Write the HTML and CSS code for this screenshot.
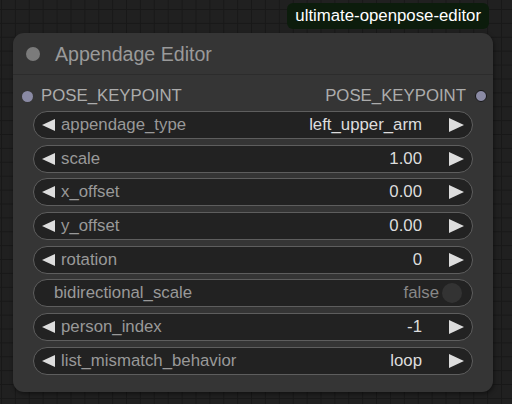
FILE: index.html
```html
<!DOCTYPE html>
<html>
<head>
<meta charset="utf-8">
<link rel="stylesheet" href="styles.css">
</head>
<body>
<div class="canvas">
  <div class="badge-row"><span class="badge">ultimate-openpose-editor</span></div>
  <div class="node">
    <div class="title">
      <span class="title-dot"></span>
      <span class="title-text">Appendage Editor</span>
    </div>
    <div class="body">
      <div class="slots">
        <div class="slot in"><span class="sdot"></span><span>POSE_KEYPOINT</span></div>
        <div class="slot out"><span>POSE_KEYPOINT</span><span class="sdot odot"></span></div>
      </div>
      <div class="widgets">
        <div class="w combo"><span class="al"></span><span class="lbl">appendage_type</span><span class="val">left_upper_arm</span><span class="ar"></span></div>
        <div class="w combo"><span class="al"></span><span class="lbl">scale</span><span class="val">1.00</span><span class="ar"></span></div>
        <div class="w combo"><span class="al"></span><span class="lbl">x_offset</span><span class="val">0.00</span><span class="ar"></span></div>
        <div class="w combo"><span class="al"></span><span class="lbl">y_offset</span><span class="val">0.00</span><span class="ar"></span></div>
        <div class="w combo"><span class="al"></span><span class="lbl">rotation</span><span class="val">0</span><span class="ar"></span></div>
        <div class="w toggle"><span class="lbl">bidirectional_scale</span><span class="tval">false</span><span class="knob"></span></div>
        <div class="w combo"><span class="al"></span><span class="lbl">person_index</span><span class="val">-1</span><span class="ar"></span></div>
        <div class="w combo"><span class="al"></span><span class="lbl">list_mismatch_behavior</span><span class="val">loop</span><span class="ar"></span></div>
      </div>
    </div>
  </div>
</div>
</body>
</html>
```
FILE: styles.css
```css
html, body {
  margin: 0;
  padding: 0;
}
body {
  width: 512px;
  height: 404px;
  overflow: hidden;
  background-color: #202020;
  background-image:
    linear-gradient(to right, #181818 1px, transparent 1px),
    linear-gradient(to bottom, #181818 1px, transparent 1px);
  background-size: 13.9px 13.9px;
  background-position: 1px 9px;
  font-family: "Liberation Sans", Arial, sans-serif;
}
.canvas {
  display: flex;
  flex-direction: column;
  padding-top: 3px;
}
.badge-row {
  display: flex;
  justify-content: flex-end;
  padding-right: 23px;
}
.badge {
  background: #0c1c0c;
  color: #ffffff;
  font-size: 16.8px;
  height: 26px;
  line-height: 26px;
  padding: 0 8px;
  border-radius: 6px;
}
.node {
  margin-top: 4px;
  margin-left: 13px;
  width: 480px;
  height: 359px;
  background: #353535;
  border-radius: 11px;
  box-shadow: 1px 2px 4px rgba(0,0,0,0.45);
  display: flex;
  flex-direction: column;
}
.title {
  height: 42px;
  box-sizing: border-box;
  border-bottom: 1px solid #2c2c2c;
  display: flex;
  align-items: center;
  padding-left: 13px;
  padding-top: 1px;
}
.title-dot {
  width: 14px;
  height: 14px;
  border-radius: 50%;
  background: #7b7b7b;
}
.title-text {
  margin-left: 15px;
  font-size: 19.6px;
  color: #9a9a9a;
}
.body {
  padding-top: 7px;
  display: flex;
  flex-direction: column;
}
.slots {
  height: 28px;
  display: flex;
  justify-content: space-between;
  align-items: center;
  font-size: 16.8px;
  color: #acacac;
}
.slot {
  display: flex;
  align-items: center;
}
.slot.in {
  padding-left: 9px;
}
.slot.in .sdot {
  margin-right: 8px;
}
.slot.out {
  padding-right: 6px;
}
.sdot {
  width: 11px;
  height: 11px;
  border-radius: 50%;
  background: #8a8aa4;
}
.odot {
  width: 10px;
  height: 10px;
  border: 1.5px solid #161616;
  margin-left: 9px;
}
.widgets {
  margin-top: 1px;
  padding: 0 20px;
  display: flex;
  flex-direction: column;
  gap: 5.67px;
}
.w {
  height: 28px;
  box-sizing: border-box;
  border: 1px solid #5e5e5e;
  border-radius: 14px;
  background: #222222;
  display: flex;
  align-items: center;
  font-size: 16.8px;
}
.combo {
  padding: 0 8px;
}
.al {
  width: 0;
  height: 0;
  border-top: 6.5px solid transparent;
  border-bottom: 6.5px solid transparent;
  border-right: 13px solid #dddddd;
}
.ar {
  width: 0;
  height: 0;
  border-top: 7px solid transparent;
  border-bottom: 7px solid transparent;
  border-left: 15px solid #dddddd;
}
.lbl {
  color: #999999;
  margin-left: 6px;
  flex: 1;
}
.val {
  color: #dddddd;
  margin-right: 27px;
}
.toggle {
  padding: 0 10px 0 20px;
}
.toggle .lbl {
  margin-left: 0;
}
.tval {
  color: #888888;
  margin-right: 3px;
}
.knob {
  width: 20px;
  height: 20px;
  border-radius: 50%;
  background: #333333;
}
```
